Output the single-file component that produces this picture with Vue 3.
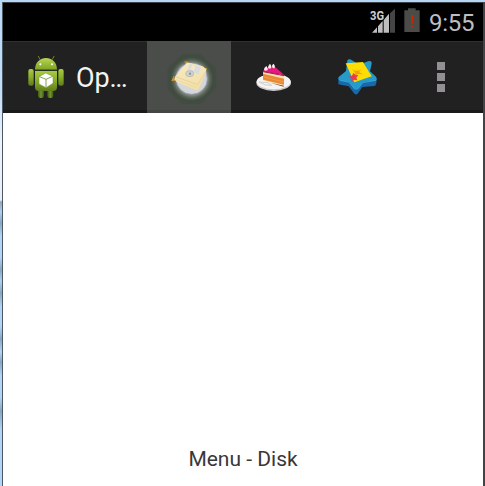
<script setup>
const title = 'Op…'
const time = '9:55'
const message = 'Menu - Disk'
</script>

<template>
  <div class="window">
    <div class="frame-left"></div>
    <div class="screen">
      <header class="status">
        <svg class="signal" viewBox="0 0 84 84">
          <path d="M6 83L21 67V83Z M24 64L38 48V83H24Z M41 45L57 26V83H41Z" fill="#bebebe" />
          <path d="M60 25L75 11V83H60Z" fill="#454545" />
          <text x="0" y="45" textLength="42" lengthAdjust="spacingAndGlyphs">3G</text>
        </svg>
        <svg class="battery" viewBox="0 0 48 75">
          <path d="M1 7H12V1H35V7H47V72H1Z" fill="#4b4b48" />
          <path d="M21 21H29L27 47H23Z M22 52H28V59H22Z" fill="#c42805" />
        </svg>
        <span class="time">{{ time }}</span>
      </header>

      <nav class="actions">
        <div class="home">
          <svg class="robot" viewBox="0 0 165 180">
            <defs>
              <linearGradient id="green" x1="0" y1="0" x2="0" y2="1">
                <stop offset="0" stop-color="#a9ca43" />
                <stop offset=".5" stop-color="#87ad29" />
                <stop offset="1" stop-color="#5f7d1b" />
              </linearGradient>
              <linearGradient id="head" x1="0" y1="0" x2="0" y2="1">
                <stop offset="0" stop-color="#b8d654" />
                <stop offset="1" stop-color="#7fa423" />
              </linearGradient>
              <linearGradient id="leg" x1="0" y1="0" x2="1" y2="0">
                <stop offset="0" stop-color="#405a17" />
                <stop offset=".5" stop-color="#74952c" />
                <stop offset="1" stop-color="#3b5314" />
              </linearGradient>
            </defs>
            <path d="M55 34L60 43M102 34L97 43" stroke="#6d8a25" stroke-width="3" stroke-linecap="round" />
            <rect x="54" y="128" width="18" height="31" rx="7" fill="url(#leg)" />
            <rect x="82" y="128" width="18" height="31" rx="7" fill="url(#leg)" />
            <rect x="25" y="72" width="16" height="50" rx="6" fill="url(#green)" />
            <rect x="115" y="72" width="16" height="50" rx="6" fill="url(#green)" />
            <path d="M45 74C45 27 111 27 111 74Z" fill="url(#head)" />
            <path d="M45 78H111V126Q111 138 100 138H56Q45 138 45 126Z" fill="url(#green)" />
            <path d="M45 75H111" stroke="#395413" stroke-width="2" />
            <circle cx="61" cy="58" r="3" fill="#fff" />
            <circle cx="96" cy="58" r="3" fill="#fff" />
            <path d="M77 84L99 94V115L78 128L57 117V95Z" fill="#fff" stroke="#70902b" stroke-width="1.5" />
            <path d="M58 95L78 103L98 94M78 103V127" fill="none" stroke="#6d8d38" stroke-width="2.5" />
          </svg>
          <span class="title">{{ title }}</span>
        </div>

        <button class="action selected">
          <svg viewBox="0 0 252 216">
            <defs>
              <radialGradient id="halo">
                <stop offset="0" stop-color="#aab0a8" />
                <stop offset=".62" stop-color="#8b9389" />
                <stop offset=".76" stop-color="#566054" />
                <stop offset=".87" stop-color="#414c40" />
                <stop offset="1" stop-color="#424c41" />
              </radialGradient>
              <linearGradient id="disk" x1="0" y1="0" x2=".3" y2="1">
                <stop offset="0" stop-color="#f8ebc3" />
                <stop offset="1" stop-color="#f3dfa8" />
              </linearGradient>
            </defs>
            <g transform="translate(54 27)">
              <path d="M52 12H106L154 55V114L108 162H50L7 117V54Z" fill="url(#halo)" />
              <circle cx="80" cy="86" r="47" fill="#d3d7d9" stroke="#858eae" stroke-width="2" />
              <path d="M58 34L72 35L65 48Z M115 53L127 55L121 64Z M26 77L19 93L34 92Z" fill="#c29337" />
              <path d="M65 39L71 38L113 49L124 58L121 72L101 117L94 121L35 96L29 88L31 79Z" fill="url(#disk)" />
              <path d="M31 80L98 104L123 63" fill="none" stroke="#e3cf98" stroke-width="2.5" />
              <path d="M33 89L95 113" stroke="#e9d69f" stroke-width="2" />
              <path d="M74 41L108 51L101 74L67 60Z" fill="#dcdddb" />
              <path d="M82 46L91 49L86 62L77 58Z" fill="#f3e9c8" />
              <ellipse cx="74" cy="71" rx="12" ry="9" fill="#d0d4d1" stroke="#a8aeaa" stroke-width="2" />
              <circle cx="75" cy="71" r="3.5" fill="#8c9697" />
            </g>
          </svg>
        </button>

        <button class="action">
          <svg viewBox="0 0 252 216">
            <g transform="translate(42 27)">
              <ellipse cx="86" cy="98" rx="52" ry="25" fill="#c9c6c8" />
              <ellipse cx="86" cy="95" rx="51" ry="23" fill="#f5f3f4" />
              <path d="M42 96Q59 108 80 106L69 98Z" fill="none" stroke="#d2ced0" stroke-width="3" />
              <path d="M54 64L118 76L116 109L54 91Z" fill="#f8e0aa" />
              <path d="M54 71L117 86V104L54 89Z" fill="#e88a35" />
              <path d="M54 80L117 96" stroke="#f0a355" stroke-width="2" />
              <path d="M76 98L116 107V110Z" fill="#813415" />
              <path d="M54 64L61 54L91 52L118 75Z" fill="#e31b80" />
              <path d="M54 65L117 77" stroke="#b90c56" stroke-width="3" />
              <path d="M57 60Q56 54 64 48Q71 57 67 61Q61 64 57 60M69 54Q69 46 75 41Q82 50 78 55Q73 57 69 54M81 51Q80 44 86 41Q92 48 89 54Q84 56 81 51" fill="#ffe9ee" />
            </g>
          </svg>
        </button>

        <button class="action">
          <svg viewBox="0 0 252 216">
            <g transform="translate(45 27)">
              <path d="M25 82V103L56 109L72 130Q78 137 84 130L97 111L133 108Q140 106 140 86Z" fill="#1768ac" />
              <path d="M52 31Q58 25 66 31L87 44L114 34Q126 31 125 41L120 64L138 80Q144 90 134 93L99 96L84 117Q78 121 72 116L57 96L31 92Q22 88 27 80L48 63Z" fill="#269ac8" />
              <path d="M30 91L57 97L75 118M82 118L99 98L138 91" fill="none" stroke="#48aed5" stroke-width="2" />
              <path d="M47 40L99 36L125 79L73 97Z" fill="#ffdd05" />
              <path d="M66 56Q77 68 95 58L87 66L99 73L84 72L75 79L75 68Z" fill="#f5a20a" />
              <path d="M71 68L76 76L85 75L79 83L82 91L72 89L64 95L63 86L56 80L66 77Z" fill="#e43c56" />
            </g>
          </svg>
        </button>

        <button class="action overflow" aria-label="More options">
          <i></i><i></i><i></i>
        </button>
      </nav>

      <main class="content"><span>{{ message }}</span></main>
    </div>
    <div class="frame-right"></div>
  </div>
</template>

<style>
body {
  margin: 0;
  overflow: hidden;
}
</style>

<style scoped>
.window {
  display: grid;
  grid-template-columns: 3px 480px 2px;
  box-sizing: border-box;
  width: 485px;
  height: 486px;
  border-top: 2px solid #b6d6f5;
  font-family: Roboto, sans-serif;
}
.frame-left {
  box-sizing: border-box;
  border-right: 1px solid #4e5862;
  background: linear-gradient(#b8d8f7 0, #c3def7 90px, #eef3fa 140px, #e9eff7 198px, #92a6bb 200px, #afd0f0 210px, #8ba5be 221px, #b2d5f7 234px, #b2d5f7 255px, #8ba5be 268px, #add0f1 279px, #8ba5be 291px, #b2d5f7 305px, #b2d5f7 324px, #8ba5be 337px, #b2d5f7 350px, #8ba5be 360px, #b2d5f7 374px, #b2d5f7 395px, #8ba5be 409px, #b2d5f7 428px);
}
.frame-right {
  background: #424446;
}
.screen {
  display: flex;
  flex-direction: column;
  background: #fff;
}
.status {
  display: flex;
  flex: 0 0 39px;
  box-sizing: border-box;
  align-items: flex-start;
  border-top: 1px solid #3a4046;
  background: #000;
  color: #bebebe;
}
.signal {
  width: 28px;
  height: 28px;
  margin: 2px 0 0 367px;
  overflow: visible;
}
.signal text {
  fill: #d0d0d0;
  stroke: #000;
  stroke-width: 5px;
  paint-order: stroke;
  font: 700 41px Roboto, sans-serif;
}
.battery {
  width: 16px;
  height: 25px;
  margin: 5px 0 0 6px;
}
.time {
  margin: 4px 0 0 9px;
  font-size: 24px;
  line-height: 32px;
  letter-spacing: -0.3px;
  white-space: nowrap;
}
.actions {
  display: flex;
  flex: 0 0 72px;
  box-sizing: border-box;
  height: 72px;
  min-height: 0;
  border-top: 1px solid #303030;
  border-bottom: 3px solid #191919;
  background: #212121;
}
.home {
  display: flex;
  width: 144px;
  height: 68px;
}
.robot {
  width: 55px;
  height: 60px;
  margin: 3px 0 0 17px;
}
.title {
  margin-left: 1px;
  color: #f3f3f3;
  font-size: 27px;
  line-height: 72px;
  letter-spacing: -0.1px;
}
.action {
  width: 84px;
  height: 68px;
  flex: none;
  padding: 0;
  border: 0;
  background: none;
}
.action svg {
  display: block;
  width: 84px;
  height: 72px;
  margin: -1px 0 -3px;
}
.selected {
  height: 72px;
  margin: -1px 0 -3px;
  background: linear-gradient(#4b4d4a 69px, #444643 69px);
}
.selected svg {
  margin: 0;
}
.overflow {
  display: flex;
  flex-direction: column;
  align-items: center;
  justify-content: flex-start;
  gap: 3px;
  padding-top: 20px;
}
.overflow i {
  width: 8px;
  height: 8px;
  background: #929092;
}
.content {
  display: flex;
  flex: 1;
  align-items: flex-end;
  justify-content: center;
  padding-bottom: 14px;
  color: #383838;
  font-size: 21px;
  line-height: 25px;
}
</style>
